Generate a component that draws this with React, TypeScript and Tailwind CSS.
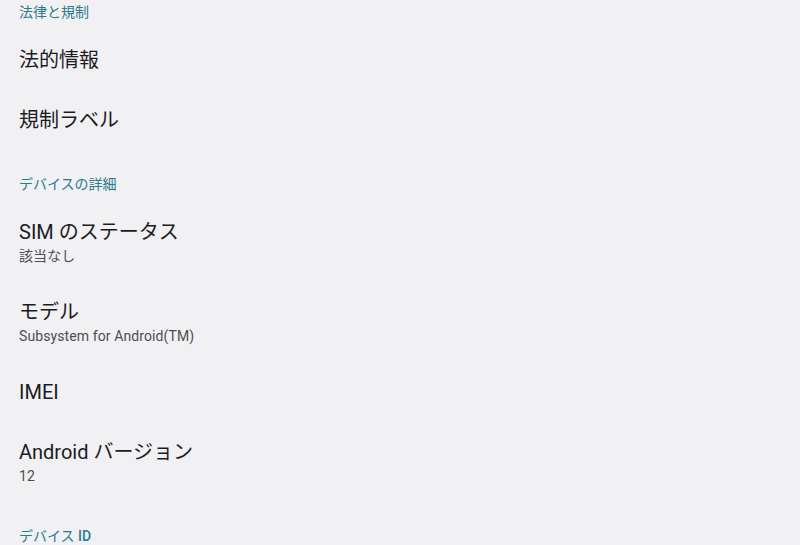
import React from "react";

const font = { fontFamily: '"Roboto", "Noto Sans CJK JP", sans-serif' };

function Header({ children, first }: { children: React.ReactNode; first?: boolean }) {
  return (
    <div className={first ? "px-[19px] pb-[6px]" : "px-[19px] pt-[22px] pb-[6px]"}>
      <div className="text-[14px] leading-[24px] text-[#2b7a8e] font-normal">{children}</div>
    </div>
  );
}

function Item({ title, sub }: { title: string; sub?: string }) {
  if (!sub) {
    return (
      <div className="h-[60px] px-[19px] flex items-center">
        <div className="text-[20px] leading-[28px] text-[#1c1b1f]">{title}</div>
      </div>
    );
  }
  return (
    <div className="h-[80px] px-[19px] py-[16px]">
      <div className="text-[20px] leading-[28px] text-[#1c1b1f]">{title}</div>
      <div className="text-[14px] leading-[20px] text-[#4d4d52] tracking-[0.1px]">{sub}</div>
    </div>
  );
}

export default function App() {
  return (
    <div className="w-[800px] h-[545px] overflow-hidden bg-[#f1f0f3]" style={font}>
      <Header first>法律と規制</Header>
      <Item title="法的情報" />
      <Item title="規制ラベル" />
      <Header>デバイスの詳細</Header>
      <Item title="SIM のステータス" sub="該当なし" />
      <Item title="モデル" sub="Subsystem for Android(TM)" />
      <Item title="IMEI" />
      <Item title="Android バージョン" sub="12" />
      <Header>
        デバイス <span className="font-medium">ID</span>
      </Header>
    </div>
  );
}
